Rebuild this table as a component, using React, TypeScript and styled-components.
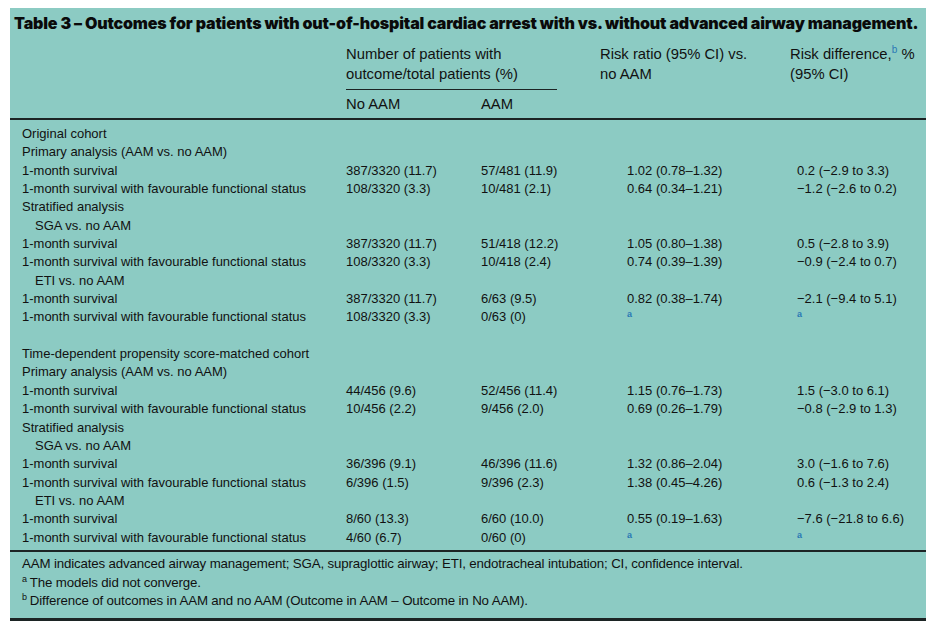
import React from 'react';
import styled, { createGlobalStyle } from 'styled-components';

const GlobalStyle = createGlobalStyle`
  body {
    margin: 0;
    background: #ffffff;
    font-family: "Liberation Sans", Arial, Helvetica, sans-serif;
    color: #111;
  }
`;

const COLS = '336px 135px 119px 190px 136px';

const TableBox = styled.div`
  margin: 8px 0 0 10px;
  width: 916px;
  background: #8ccbc3;
  border-bottom: 3px solid #1c2424;
`;

const Title = styled.div`
  padding: 5px 0 0 4px;
  line-height: 20px;
  font-family: Inter, "Liberation Sans", sans-serif;
  font-weight: 900;
  font-size: 16px;
  letter-spacing: -0.15px;
  color: #0a0a0a;
  white-space: nowrap;
`;

const Head = styled.div`
  display: grid;
  grid-template-columns: ${COLS};
  padding: 11px 0 4px;
  border-bottom: 2px solid #1c2424;
  font-size: 14.8px;
  line-height: 20px;
`;

const SpanHead = styled.div`
  grid-column: 2 / 4;
  grid-row: 1;
  width: 211px;
  padding-bottom: 5px;
  border-bottom: 1.5px solid #1c2424;
`;

const SideHead = styled.div<{ $col: number }>`
  grid-column: ${(p) => p.$col};
  grid-row: 1;
`;

const SubHead = styled.div<{ $col: number }>`
  grid-column: ${(p) => p.$col};
  grid-row: 2;
  padding-top: 4px;
`;

const Body = styled.div`
  padding: 5px 0 3px;
  border-bottom: 2px solid #1c2424;
`;

const Row = styled.div`
  display: grid;
  grid-template-columns: ${COLS};
  height: 18.35px;
  line-height: 18.35px;
  font-size: 13px;
  white-space: nowrap;
`;

const Label = styled.div<{ $indent?: boolean }>`
  padding-left: ${(p) => (p.$indent ? '25px' : '12px')};
`;

const Cell = styled.div<{ $pad?: number }>`
  padding-left: ${(p) => p.$pad ?? 0}px;
`;

const Sup = styled.sup<{ $big?: boolean }>`
  font-size: ${(p) => (p.$big ? '10px' : '9px')};
  font-weight: ${(p) => (p.$big ? 400 : 700)};
  color: #2a78b5;
  line-height: 0;
  vertical-align: ${(p) => (p.$big ? '6px' : '4px')};
`;

const Foot = styled.div`
  padding: 3.5px 0 7px 12px;
  font-size: 13.3px;
  line-height: 18.5px;
  letter-spacing: -0.15px;
  white-space: nowrap;
`;

const FootSup = styled.sup`
  font-size: 9px;
  line-height: 0;
  vertical-align: 5px;
  margin-right: 3px;
`;

type Line = {
  label?: string;
  indent?: boolean;
  no?: string;
  aam?: string;
  rr?: string;
  rd?: string;
};

const rows: Line[] = [
  { label: 'Original cohort' },
  { label: 'Primary analysis (AAM vs. no AAM)' },
  { label: '1-month survival', no: '387/3320 (11.7)', aam: '57/481 (11.9)', rr: '1.02 (0.78–1.32)', rd: '0.2 (−2.9 to 3.3)' },
  { label: '1-month survival with favourable functional status', no: '108/3320 (3.3)', aam: '10/481 (2.1)', rr: '0.64 (0.34–1.21)', rd: '−1.2 (−2.6 to 0.2)' },
  { label: 'Stratified analysis' },
  { label: 'SGA vs. no AAM', indent: true },
  { label: '1-month survival', no: '387/3320 (11.7)', aam: '51/418 (12.2)', rr: '1.05 (0.80–1.38)', rd: '0.5 (−2.8 to 3.9)' },
  { label: '1-month survival with favourable functional status', no: '108/3320 (3.3)', aam: '10/418 (2.4)', rr: '0.74 (0.39–1.39)', rd: '−0.9 (−2.4 to 0.7)' },
  { label: 'ETI vs. no AAM', indent: true },
  { label: '1-month survival', no: '387/3320 (11.7)', aam: '6/63 (9.5)', rr: '0.82 (0.38–1.74)', rd: '−2.1 (−9.4 to 5.1)' },
  { label: '1-month survival with favourable functional status', no: '108/3320 (3.3)', aam: '0/63 (0)' },
  {},
  { label: 'Time-dependent propensity score-matched cohort' },
  { label: 'Primary analysis (AAM vs. no AAM)' },
  { label: '1-month survival', no: '44/456 (9.6)', aam: '52/456 (11.4)', rr: '1.15 (0.76–1.73)', rd: '1.5 (−3.0 to 6.1)' },
  { label: '1-month survival with favourable functional status', no: '10/456 (2.2)', aam: '9/456 (2.0)', rr: '0.69 (0.26–1.79)', rd: '−0.8 (−2.9 to 1.3)' },
  { label: 'Stratified analysis' },
  { label: 'SGA vs. no AAM', indent: true },
  { label: '1-month survival', no: '36/396 (9.1)', aam: '46/396 (11.6)', rr: '1.32 (0.86–2.04)', rd: '3.0 (−1.6 to 7.6)' },
  { label: '1-month survival with favourable functional status', no: '6/396 (1.5)', aam: '9/396 (2.3)', rr: '1.38 (0.45–4.26)', rd: '0.6 (−1.3 to 2.4)' },
  { label: 'ETI vs. no AAM', indent: true },
  { label: '1-month survival', no: '8/60 (13.3)', aam: '6/60 (10.0)', rr: '0.55 (0.19–1.63)', rd: '−7.6 (−21.8 to 6.6)' },
  { label: '1-month survival with favourable functional status', no: '4/60 (6.7)', aam: '0/60 (0)' },
];

const Value = ({ v }: { v?: string }) => (v ? <>{v}</> : <Sup>a</Sup>);

export default function App() {
  return (
    <>
      <GlobalStyle />
      <TableBox>
        <Title>
          Table 3 – Outcomes for patients with out-of-hospital cardiac arrest with vs. without advanced airway management.
        </Title>
        <Head>
          <SpanHead>
            Number of patients with
            <br />
            outcome/total patients (%)
          </SpanHead>
          <SideHead $col={4}>
            Risk ratio (95% CI) vs.
            <br />
            no AAM
          </SideHead>
          <SideHead $col={5}>
            Risk difference,<Sup $big>b</Sup> %
            <br />
            (95% CI)
          </SideHead>
          <SubHead $col={2}>No AAM</SubHead>
          <SubHead $col={3}>AAM</SubHead>
        </Head>
        <Body>
          {rows.map((r, i) => (
            <Row key={i}>
              <Label $indent={r.indent}>{r.label}</Label>
              <Cell>{r.no}</Cell>
              <Cell>{r.aam}</Cell>
              <Cell $pad={27}>{r.no && <Value v={r.rr} />}</Cell>
              <Cell $pad={7}>{r.no && <Value v={r.rd} />}</Cell>
            </Row>
          ))}
        </Body>
        <Foot>
          <div>
            AAM indicates advanced airway management; SGA, supraglottic airway; ETI, endotracheal intubation; CI, confidence interval.
          </div>
          <div>
            <FootSup>a</FootSup>The models did not converge.
          </div>
          <div>
            <FootSup>b</FootSup>Difference of outcomes in AAM and no AAM (Outcome in AAM – Outcome in No AAM).
          </div>
        </Foot>
      </TableBox>
    </>
  );
}
